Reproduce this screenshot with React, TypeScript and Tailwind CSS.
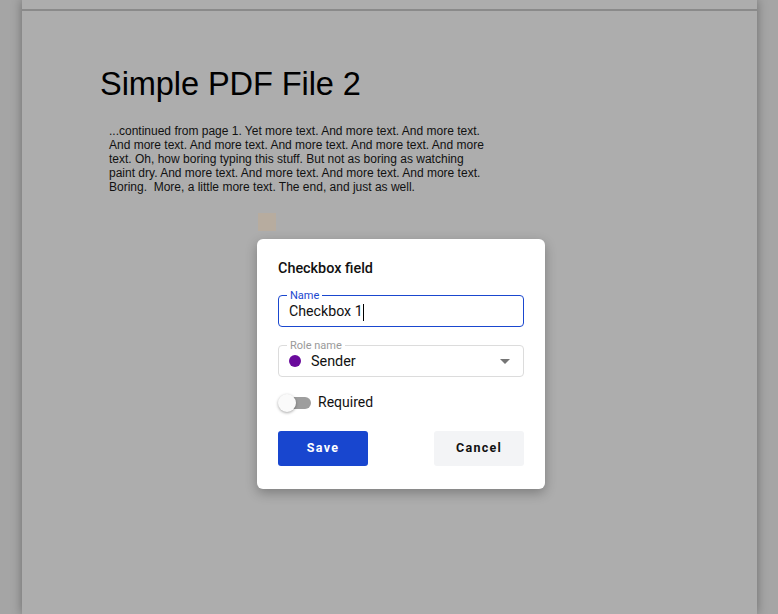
import React from 'react';

const bodyLines = [
  '...continued from page 1. Yet more text. And more text. And more text.',
  'And more text. And more text. And more text. And more text. And more',
  'text. Oh, how boring typing this stuff. But not as boring as watching',
  'paint dry. And more text. And more text. And more text. And more text.',
  'Boring.  More, a little more text. The end, and just as well.',
];

export default function App() {
  return (
    <div className="relative h-[614px] w-[778px] overflow-hidden bg-[#a5a5a5]">
      {/* PDF pages (dimmed by the modal backdrop) */}
      <div className="mx-[22px] flex h-full w-[735px] flex-col shadow-[0_0_10px_rgba(0,0,0,0.35)]">
        <div className="h-[9px] bg-[#adadad]" />
        <div className="h-[2px] bg-[#8a8a8a]" />
        <div className="flex-1 bg-[#adadad] pl-[78px] pt-[53px] font-['Liberation_Sans',Arial,sans-serif] text-black">
          <h1 className="text-[32.6px] leading-[40px] tracking-[-0.1px]">Simple PDF File 2</h1>
          <div className="mt-[20px] pl-[9px] text-[12px] leading-[14.1px] text-[#111]">
            {bodyLines.map((l) => (
              <div key={l} className="whitespace-pre">{l}</div>
            ))}
          </div>
        </div>
      </div>

      {/* checkbox field placeholder on the page */}
      <div className="absolute left-[258px] top-[213px] h-[18px] w-[18px] rounded-none bg-[#b7ac9f]" />

      {/* Checkbox field dialog */}
      <div className="absolute left-[257px] top-[239px] w-[288px] rounded-md bg-white px-[21px] pt-[22px] pb-[23px] font-['Roboto',sans-serif] shadow-[0_4px_12px_rgba(0,0,0,0.28)]">
        <div className="text-[14.4px] font-medium leading-[16px] text-[#111]">Checkbox field</div>

        <div className="relative mt-[18px] flex h-[32px] items-center rounded-[4px] border-[1.5px] border-[#1a47cf] px-[10px]">
          <span className="absolute left-[8px] top-[-7px] bg-white px-[3px] text-[11px] leading-[13px] text-[#1a47cf]">
            Name
          </span>
          <span className="pt-[1px] text-[14.2px] text-[#111]">Checkbox 1</span>
          <span className="mt-[2px] h-[17px] w-px bg-black" />
        </div>

        <div className="relative mt-[18px] flex h-[32px] items-center rounded-[4px] border border-[#dcdcdc] pl-[10px] pr-[13px]">
          <span className="absolute left-[8px] top-[-7px] bg-white px-[3px] text-[11px] leading-[13px] text-[#9a9a9a]">
            Role name
          </span>
          <span className="h-[12px] w-[12px] rounded-full bg-[#6a0a9c]" />
          <span className="ml-[10px] pt-[1px] text-[14.4px] text-[#111]">Sender</span>
          <svg className="ml-auto" width="10" height="5" viewBox="0 0 10 5">
            <path d="M0 0h10L5 5z" fill="#757575" />
          </svg>
        </div>

        <div className="mt-[15px] flex items-center">
          <div className="relative h-[18px] w-[33px]">
            <div className="absolute right-0 top-[3px] h-[12px] w-[26px] rounded-full bg-[#9e9e9e]" />
            <div className="absolute left-0 top-0 h-[18px] w-[18px] rounded-full bg-[#fafafa] shadow-[0_1px_3px_rgba(0,0,0,0.35)]" />
          </div>
          <span className="ml-[7px] text-[14px] text-[#111]">Required</span>
        </div>

        <div className="mt-[18px] flex justify-between">
          <button className="h-[35px] w-[90px] rounded-[3px] bg-[#1846cf] text-[12.5px] font-bold tracking-[0.1em] text-white">
            Save
          </button>
          <button className="h-[35px] w-[90px] rounded-[3px] bg-[#f3f4f6] text-[12.5px] font-bold tracking-[0.1em] text-[#111]">
            Cancel
          </button>
        </div>
      </div>
    </div>
  );
}
